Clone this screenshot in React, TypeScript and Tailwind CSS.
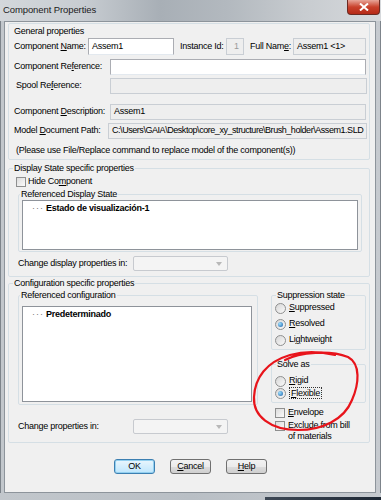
import React from "react";

const ui = { fontFamily: '"Liberation Sans", Arial, sans-serif' };

function U({ text, at }: { text: string; at: number }) {
  return (
    <span>
      {text.slice(0, at)}
      <span className="underline underline-offset-[1px]">{text[at]}</span>
      {text.slice(at + 1)}
    </span>
  );
}

function Box({ children, className = "" }: { children?: React.ReactNode; className?: string }) {
  return (
    <div className={`flex items-center overflow-hidden border border-[#c9ced4] bg-[#eeeeee] pl-[3px] ${className}`}>
      {children}
    </div>
  );
}

function Edit({ children, className = "" }: { children?: React.ReactNode; className?: string }) {
  return (
    <div className={`flex items-center border border-[#abadb3] border-b-[#e3e9ef] bg-white pl-[3px] ${className}`}>
      {children}
    </div>
  );
}

function Combo({ className = "" }: { className?: string }) {
  return (
    <div className={`flex items-center justify-end rounded-[2px] border border-[#c7cacf] bg-[#f4f4f4] pr-[5px] ${className}`}>
      <svg width="6" height="4" viewBox="0 0 6 4">
        <path d="M0 0h6L3 4z" fill="#b8b8b8" />
      </svg>
    </div>
  );
}

function Check() {
  return (
    <span className="block h-[10px] w-[10px] border border-[#8e8f8f] bg-[linear-gradient(135deg,#dcdcdc,#fbfbfb)]" />
  );
}

function Radio({ on = false }: { on?: boolean }) {
  return (
    <span className="flex h-[11px] w-[11px] items-center justify-center rounded-full border border-[#8e8f8f] bg-[linear-gradient(135deg,#d6d6d6,#fafafa)]">
      {on && <span className="h-[5px] w-[5px] rounded-full bg-[radial-gradient(circle_at_35%_35%,#9be0ff,#1a5fa8)]" />}
    </span>
  );
}

function Legend({ children }: { children: React.ReactNode }) {
  return <legend className="ml-[4px] px-[1px] leading-[12px]">{children}</legend>;
}

function Tree({ label }: { label: string }) {
  return (
    <div className="flex items-center pl-[9px] pt-[1px] leading-[12px]">
      <span className="tracking-[1px] text-[#777]">···</span>
      <span className="ml-[2px] font-bold">{label}</span>
    </div>
  );
}

const btn =
  "h-[15px] w-[41px] rounded-[3px] border border-[#707070] bg-[linear-gradient(180deg,#f2f2f2,#ebebeb_50%,#dddddd_51%,#cfcfcf)] text-[9px] leading-[13px]";

export default function App() {
  return (
    <div
      className="relative flex h-[500px] w-[381px] flex-col overflow-hidden whitespace-nowrap bg-[linear-gradient(90deg,#c2c7cc,#b9bfc5_50%,#c6cacf)] text-[9px] tracking-[-0.25px] text-black"
      style={ui}
    >
      <div className="flex h-[21px] items-start justify-between bg-[linear-gradient(90deg,#d3d7db_0%,#c7ccd1_22%,#a8afb6_42%,#b3b9bf_60%,#c8ccd0_80%,#d6d9dc_100%)]">
        <span className="pl-[3px] pt-[4px] text-[9.5px] leading-[12px] tracking-[-0.1px] text-[#1b1b1b]">Component Properties</span>
        <div className="mr-[1px] flex h-[15px] w-[33px] items-center justify-center rounded-b-[4px] border border-t-0 border-[#6b2a22] bg-[linear-gradient(180deg,#e8a699,#c9412c_50%,#b52a17)]">
          <svg width="10" height="8" viewBox="0 0 10 8">
            <path d="M1 0.5l8 7M9 0.5l-8 7" stroke="#fff" strokeWidth="2" />
          </svg>
        </div>
      </div>

      <div className="flex">
        <div className="w-[4px] border-l border-[#7d848b]" />
        <div className="flex h-[472px] w-[372px] flex-col border border-[#8d949b] bg-[#f0f0f0] pl-[3px]">
          {/* General properties */}
          <div className="mt-[1px] flex h-[137px] w-[362px] flex-col rounded-[2px] border border-[#d5dfe5] pl-[5px]">
            <div className="mt-[1px] leading-[12px]">General properties</div>
            <div className="mt-[1px] flex h-[17px] items-center">
              <span className="w-[74px]"><U text="Component Name:" at={10} /></span>
              <Edit className="h-[17px] w-[86px]">Assem1</Edit>
              <span className="ml-[6px] w-[46px]">Instance Id:</span>
              <Box className="h-[17px] w-[18px] justify-center pl-0 text-[#9a9a9a]">1</Box>
              <span className="ml-[6px] w-[43px]"><U text="Full Name:" at={8} /></span>
              <Box className="h-[17px] w-[73px]">Assem1 &lt;1&gt;</Box>
            </div>
            <div className="mt-[4px] flex h-[16px] items-center">
              <span className="w-[96px]"><U text="Component Reference:" at={12} /></span>
              <Edit className="h-[16px] w-[256px]" />
            </div>
            <div className="mt-[3px] flex h-[16px] items-center">
              <span className="w-[96px] pl-[2px]"><U text="Spool Reference:" at={8} /></span>
              <Box className="h-[16px] w-[257px]" />
            </div>
            <div className="mt-[10px] flex h-[16px] items-center">
              <span className="w-[96px]"><U text="Component Description:" at={10} /></span>
              <Box className="h-[16px] w-[256px]">Assem1</Box>
            </div>
            <div className="mt-[3px] flex h-[16px] items-center">
              <span className="w-[94px]"><U text="Model Document Path:" at={6} /></span>
              <Box className="h-[16px] w-[259px] tracking-[-0.45px]">C:\Users\GAIA\Desktop\core_xy_structure\Brush_holder\Assem1.SLD</Box>
            </div>
            <div className="mt-[5px] pl-[2px] leading-[12px]">
              (Please use File/Replace command to replace model of the component(s))
            </div>
          </div>

          {/* Display state */}
          <fieldset className="mt-[2px] h-[115px] w-[362px] rounded-[2px] border border-[#d5dfe5]">
            <Legend>Display State specific properties</Legend>
            <div className="mt-[2px] flex h-[12px] items-center pl-[7px]">
              <Check />
              <span className="ml-[2px]"><U text="Hide Component" at={7} /></span>
            </div>
            <fieldset className="ml-[9px] h-[64px] w-[344px] rounded-[2px] border border-[#d5dfe5]">
              <legend className="ml-[1px] px-[1px] leading-[12px]">Referenced Display State</legend>
              <div className="ml-[3px] h-[50px] w-[336px] border border-[#8e939a] bg-white">
                <Tree label="Estado de visualización-1" />
              </div>
            </fieldset>
            <div className="mt-[4px] flex h-[15px] items-center pl-[9px]">
              <span className="w-[115px]">Change display properties in:</span>
              <Combo className="h-[15px] w-[95px]" />
            </div>
          </fieldset>

          {/* Configuration */}
          <fieldset className="h-[166px] w-[362px] rounded-[2px] border border-[#d5dfe5]">
            <Legend>Configuration specific properties</Legend>
            <div className="flex">
              <div className="flex flex-col">
                <fieldset className="ml-[9px] h-[116px] w-[240px] rounded-[2px] border border-[#d5dfe5]">
                  <legend className="ml-[1px] px-[1px] leading-[12px]">Referenced configuration</legend>
                  <div className="ml-[3px] mt-[5px] h-[96px] w-[230px] border border-[#8e939a] bg-white">
                    <Tree label="Predeterminado" />
                  </div>
                </fieldset>
                <div className="mt-[14px] flex h-[15px] items-center pl-[9px]">
                  <span className="w-[115px]">Change properties in:</span>
                  <Combo className="h-[15px] w-[95px]" />
                </div>
              </div>
              <div className="ml-[13px] flex w-[95px] flex-col">
                <fieldset className="h-[61px] rounded-[2px] border border-[#d5dfe5]">
                  <legend className="ml-[4px] px-[1px] leading-[12px]">Suppression state</legend>
                  <div className="flex flex-col gap-[4px] pl-[3px] pt-[1px]">
                    <div className="flex h-[12px] items-center gap-[3px]"><Radio /><U text="Suppressed" at={0} /></div>
                    <div className="flex h-[12px] items-center gap-[3px]"><Radio on /><U text="Resolved" at={0} /></div>
                    <div className="flex h-[12px] items-center gap-[3px]"><Radio /><U text="Lightweight" at={2} /></div>
                  </div>
                </fieldset>
                <fieldset className="mt-[8px] h-[45px] rounded-[2px] border border-[#d5dfe5]">
                  <legend className="ml-[4px] px-[1px] leading-[12px]">Solve as</legend>
                  <div className="flex flex-col pl-[3px] pt-[5px]">
                    <div className="flex h-[12px] items-center gap-[3px]"><Radio /><U text="Rigid" at={0} /></div>
                    <div className="flex h-[12px] items-center gap-[3px]">
                      <Radio on />
                      <span className="border border-dotted border-[#333] px-[1px] leading-[10px]"><U text="Flexible" at={0} /></span>
                    </div>
                  </div>
                </fieldset>
                <div className="mt-[4px] flex h-[12px] items-center gap-[3px] pl-[4px]">
                  <Check />
                  <U text="Envelope" at={0} />
                </div>
                <div className="mt-[1px] flex items-start gap-[3px] pl-[4px]">
                  <span className="mt-[1px]"><Check /></span>
                  <span className="leading-[11px]">Exclude from bill<br />of materials</span>
                </div>
              </div>
            </div>
          </fieldset>

          <div className="mt-[16px] flex gap-[15px] pl-[106px]">
            <button className="h-[15px] w-[41px] rounded-[3px] border border-[#3c7fb1] bg-[linear-gradient(180deg,#eaf6fd,#bee6fd)] text-[9px] leading-[13px] shadow-[inset_0_0_0_1px_#93d0f0]">OK</button>
            <button className={btn}><U text="Cancel" at={0} /></button>
            <button className={btn}><U text="Help" at={0} /></button>
          </div>
        </div>
        <div className="w-[5px] border-r border-[#7d848b]" />
      </div>
      <div className="flex h-[7px]">
        <div className="flex-1" />
        <div className="mt-[4px] h-[3px] w-[116px] bg-[linear-gradient(90deg,#3d4855,#1d2734)]" />
      </div>

      <svg className="pointer-events-none absolute left-0 top-0" width="381" height="500" viewBox="0 0 381 500">
        <path
          d="M285 360 C300 352 330 350 348 357 C361 364 359 384 352 400 C344 420 322 430 298 430 C270 430 253 416 254 397 C255 378 266 362 290 355 C305 351 322 352 335 355"
          fill="none"
          stroke="#e8141b"
          strokeWidth="2.2"
          strokeLinecap="round"
        />
      </svg>
    </div>
  );
}
